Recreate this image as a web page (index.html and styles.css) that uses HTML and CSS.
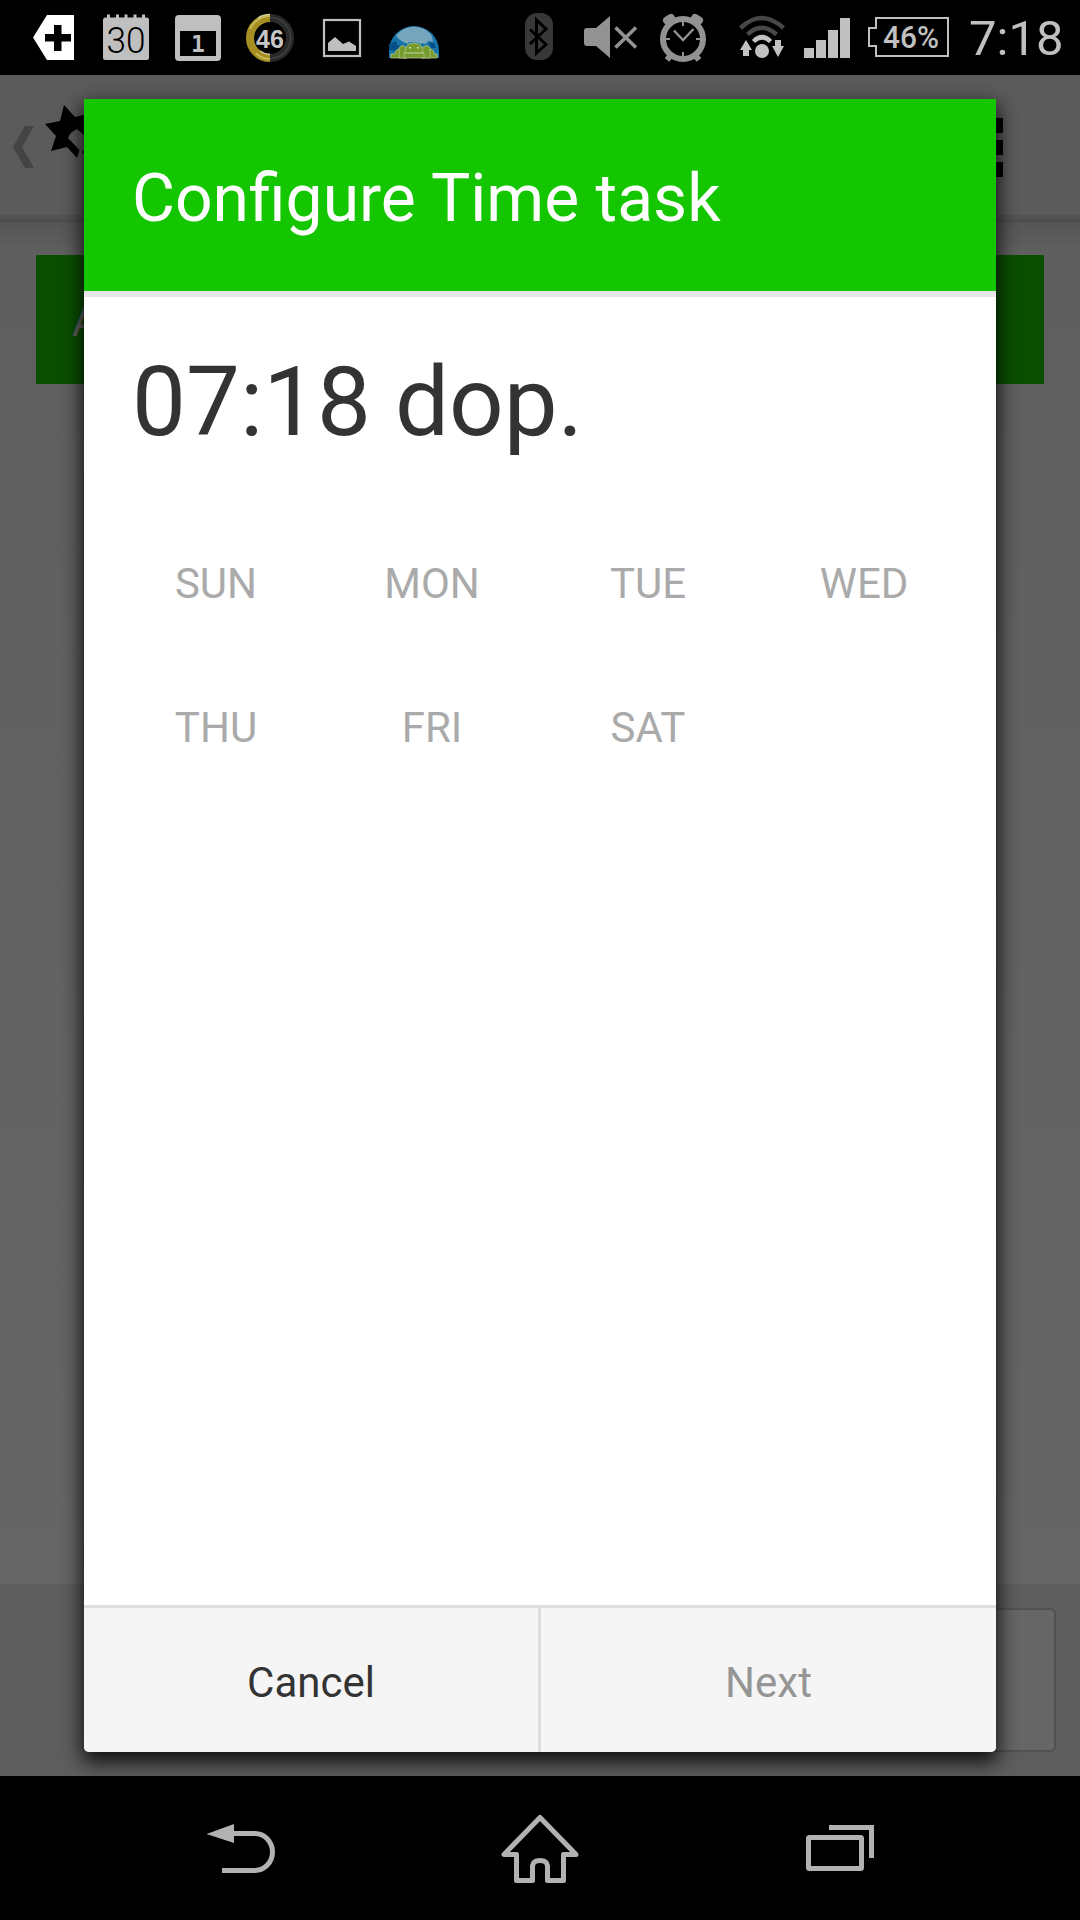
FILE: index.html
```html
<!DOCTYPE html>
<html lang="en">
<head>
<meta charset="utf-8">
<title>Configure Time task</title>
<link rel="stylesheet" href="styles.css">
</head>
<body>
<div class="screen">
  <header class="status">
    <div class="status-group notifications">
      <svg width="72" height="75" viewBox="18 0 72 75"><path fill="#fff" d="M47 15H74V60H47L33 37.500Z"/><path d="M54 25h7.500v9H71v7.500h-9.500V51H54v-9.500h-9V34h9z"/></svg>
      <svg width="72" height="75" viewBox="90 0 72 75" fill="#bfbfbf"><rect x="103" y="17.500" width="46" height="42.500" rx="2.500"/><path stroke="#bfbfbf" stroke-width="3" d="M108.500 14.500v5M117.500 14.500v5M126 14.500v5M135 14.500v5M143.500 14.500v5"/><text class="cal-thirty" x="106.500" y="52.500" textLength="39" lengthAdjust="spacingAndGlyphs">30</text></svg>
      <svg width="72" height="75" viewBox="162 0 72 75"><path fill="#bfbfbf" fill-rule="evenodd" d="M179 15H217Q221 15 221 19V57Q221 61 217 61H179Q175 61 175 57V19Q175 15 179 15ZM180 31V56H216V31Z"/><text class="cal-one" x="198" y="52">1</text></svg>
      <svg width="72" height="75" viewBox="234 0 72 75" fill="none"><circle cx="270" cy="38" r="20" stroke="#292929" stroke-width="8"/><circle cx="270" cy="38" r="20.500" stroke="#404040" stroke-width="1.500"/><path stroke="#a68e20" stroke-width="8" d="M270 18A20 20 0 0 0 270 58"/><path stroke="#c5b957" stroke-width="2" d="M270 16A22 22 0 0 0 250 29M256 53.500A21 21 0 0 0 270 59"/><path stroke="#d1cca0" stroke-width="1.500" d="M270 14.500Q263 14.500 258 18M270 54.500Q264 54 260 51"/><text class="gauge" x="270" y="48">46</text></svg>
      <svg width="72" height="75" viewBox="306 0 72 75"><rect x="324" y="20" width="36" height="36" fill="none" stroke="#bfbfbf" stroke-width="2.200"/><path fill="#bfbfbf" d="M328 51V43L335 37L343 44L349 41.500L356 46V51Z"/></svg>
      <svg width="72" height="75" viewBox="378 0 72 75"><path fill="#1874a8" d="M389 58V51A25 25 0 0 1 439 51V58Z"/><path fill="#75a6bd" d="M396 36A21 19 0 0 1 432 36L433 42L428 41L426 44L420 43L412 42L405 43L400 40Z"/><path fill="#075087" d="M389 44l7-3 2 5 3-1-3 6-9-1zM429 42l5 1 2 5h-5z"/><g fill="#759b2d" stroke="#b4c78b" stroke-width=".8"><path d="M391 58v-4h4q0-5 5-5t6 3v6zM423 58v-6q1-3 6-3t5 5h3v4z"/><path d="M399 58v-8q0-5 5-4l3 3v9zM421 58v-9q5-6 9-1v10z"/><path d="M404 58v-5h20v5zM405 53q0-10 9-10t9 10zM408 44l-2-3M420 44l2-3"/></g><path fill="#ccd8b4" d="M409 47h2v1.500h-2zM417 47h2v1.500h-2z"/></svg>
    </div>
    <div class="status-group system">
      <svg width="72" height="75" viewBox="504 0 72 75"><rect x="525" y="13" width="28" height="47" rx="12" fill="#383838"/><path fill="none" stroke="#000" stroke-width="3" d="M530 29.500L546 44.500L536.500 53V20L546 29L530 44"/></svg>
      <svg width="72" height="75" viewBox="576 0 72 75"><path fill="#929292" d="M587 28H596L610 16V58L596 46H587Q584 46 584 43V31Q584 28 587 28Z"/><path stroke="#929292" stroke-width="3.600" d="M615.500 27.500L636 47.500M636 27.500L615.500 47.500"/></svg>
      <svg width="72" height="75" viewBox="648 0 72 75" fill="none" stroke="#929292"><circle cx="683" cy="39" r="20" stroke-width="6"/><path stroke-width="8" stroke-linecap="round" d="M667 20.500L671 18M695 18L699 20.500"/><path stroke-width="6" d="M671 55L667 60M695 55L699 60"/><path stroke-width="2" d="M683 21v5M683 52v5M665 39h5M696 39h5"/><path stroke-width="2.400" d="M674 30.500L683 40L693.500 29"/></svg>
      <svg width="72" height="75" viewBox="720 0 72 75" fill="none"><path stroke="#474747" stroke-width="4.500" d="M740.500 28Q761.500 8 783.500 28M747.500 34.500Q761.500 21 776.500 34.500"/><path stroke="#c2c2c2" stroke-width="4.500" d="M753.500 41.500Q762 33 770.500 41.500"/><circle cx="762" cy="51" r="7" fill="#c2c2c2"/><path fill="#c2c2c2" d="M746 40L752 50H749V56H743V50H740ZM778 57L772 46H775V40H781V46H784Z"/></svg>
      <svg width="66" height="75" viewBox="792 0 66 75"><path fill="#c0c0c0" d="M804 48h10v10h-10zM816 40h10v18h-10zM828 30h10v28h-10zM840 18h10v40h-10z"/></svg>
      <svg width="102" height="75" viewBox="858 0 102 75"><path fill="none" stroke="#c0c0c0" stroke-width="2" d="M876 18H948V56H876V46H869V28H876Z"/><text class="battery-text" x="883" y="47.500" textLength="56" lengthAdjust="spacingAndGlyphs">46%</text></svg>
      <span class="clock">7:18</span>
    </div>
  </header>

  <main class="app">
    <div class="app-bar">
      <svg class="brand" width="110" height="142" viewBox="0 75 110 142"><path fill="#444" d="M25 126H34L22 147L34 168H25L13 147Z"/><path d="M64 105L75 117L92 113V142L84 135L77 129Q70 132 68 138L79.500 150L77 158L67 147L51 151L56 136L45 124L60 121ZM82 152L88 146V158Z"/></svg>
      <div class="overflow"><i></i><i></i><i></i></div>
    </div>
    <div class="app-body"><div class="add-button">A</div></div>
    <div class="app-footer"><div class="footer-button"></div></div>
    <section class="dialog">
      <h1 class="dialog-title">Configure Time task</h1>
      <div class="dialog-body">
        <div class="time"><span>07:18 dop.</span></div>
        <div class="days">
          <span>SUN</span><span>MON</span><span>TUE</span><span>WED</span>
          <span>THU</span><span>FRI</span><span>SAT</span>
        </div>
      </div>
      <div class="actions">
        <button class="action"><span>Cancel</span></button>
        <button class="action disabled"><span>Next</span></button>
      </div>
    </section>
  </main>

  <nav class="nav">
    <svg width="300" height="144" viewBox="90 1776 300 144"><path fill="none" stroke="#b2b2b2" stroke-width="5" d="M232 1833.500H255A17.500 18.500 0 0 1 255 1870.500H222"/><path fill="#b2b2b2" d="M206.500 1834L234 1824V1843Z"/></svg>
    <svg width="300" height="144" viewBox="390 1776 300 144"><path fill="none" stroke="#b2b2b2" stroke-width="5" stroke-linejoin="round" d="M540 1817.500L504 1854.500H516.500V1880.500H532.500V1866Q533 1860.500 540 1860.500T547.500 1866V1880.500H563.500V1854.500H576Z"/><path d="M535 1877.500H545V1884H535Z"/></svg>
    <svg width="300" height="144" viewBox="690 1776 300 144" fill="none" stroke="#b2b2b2" stroke-width="5"><rect x="808.500" y="1837.500" width="53" height="31" rx="1"/><path d="M829 1827.500H871.500V1858"/></svg>
  </nav>
</div>
</body>
</html>
```
FILE: styles.css
```css
* { box-sizing: border-box; }

body {
  margin: 0;
  background: #000;
  font-family: Roboto, "Noto Sans", sans-serif;
}

.screen {
  width: 1080px;
  height: 1920px;
  display: flex;
  flex-direction: column;
  overflow: hidden;
}

svg { display: block; flex: none; }

/* Status bar */
.status {
  height: 75px;
  flex: none;
  display: flex;
  justify-content: space-between;
  padding: 0 18px;
  background: #000;
}
.status-group { display: flex; }
.clock {
  width: 102px;
  padding: 10px 0 0 9px;
  font-size: 49px;
  line-height: 58px;
  color: #c0c0c0;
  white-space: nowrap;
}
.cal-thirty { font: 300 36px "Roboto", sans-serif; fill: #000; }
.cal-one { font: bold 23px "DejaVu Sans Mono", monospace; fill: #bfbfbf; text-anchor: middle; }
.gauge { font: bold 25px "Liberation Sans", sans-serif; fill: #c6c6c6; text-anchor: middle; }
.battery-text { font: 500 31px Roboto, sans-serif; fill: #c0c0c0; }

/* Dimmed activity behind the dialog */
.app {
  position: relative;
  flex: 1;
  display: flex;
  flex-direction: column;
  background: linear-gradient(#5e5e5e, #666);
}
.app-bar {
  height: 147px;
  flex: none;
  display: flex;
  justify-content: space-between;
  background: linear-gradient(#5b5b5b 0 140px, #535353 140px 144px, #4e4e4e 144px);
}
.overflow {
  width: 97px;
  padding-top: 43px;
  display: flex;
  flex-direction: column;
  gap: 7px;
}
.overflow i { width: 20px; height: 15px; background: #000; }
.app-body {
  flex: 1;
  padding: 33px 36px;
  background: linear-gradient(rgba(0, 0, 0, .1), transparent 30px);
}
.add-button {
  height: 129px;
  padding-left: 36px;
  background: #0a4f00;
  color: #616161;
  font-size: 42px;
  line-height: 134px;
}
.app-footer {
  height: 192px;
  flex: none;
  display: flex;
  justify-content: flex-end;
  padding: 24px;
  background: #5e5e5e;
}
.footer-button {
  width: 504px;
  height: 144px;
  border: 2px solid #515151;
  border-radius: 6px;
  background: #666;
}

/* Dialog */
.dialog {
  position: absolute;
  top: 24px;
  left: 84px;
  width: 912px;
  height: 1653px;
  display: flex;
  flex-direction: column;
  background: #fff;
  border-radius: 0 0 5px 5px;
  box-shadow: 0 8px 20px 2px rgba(0, 0, 0, .85);
}
.dialog-title {
  height: 198px;
  flex: none;
  margin: 0;
  padding-left: 48px;
  border-bottom: 6px solid #e6e6e6;
  background: #14c600;
  color: #fff;
  font-size: 66px;
  font-weight: 400;
  line-height: 199px;
}
.dialog-body { flex: 1; }
.time {
  height: 215px;
  padding-left: 48px;
  color: #333;
  font-size: 96px;
  line-height: 210px;
}
.days {
  display: grid;
  grid-template-columns: repeat(4, 216px);
  grid-auto-rows: 144px;
  padding-left: 24px;
  color: #aaa;
  font-size: 42px;
  line-height: 144px;
  text-align: center;
}
.actions {
  height: 147px;
  flex: none;
  display: grid;
  grid-template-columns: 454px 458px;
  border-top: 3px solid #ddd;
  border-radius: 0 0 5px 5px;
  overflow: hidden;
}
.action {
  padding: 5px 0 0;
  border: 0;
  border-bottom: 2px solid #d8d8d8;
  background: #f5f5f5;
  color: #333;
  font: 42px/139px Roboto, sans-serif;
}
.action + .action { border-left: 3px solid #ddd; }
.action.disabled { color: #959595; }

/* Navigation bar */
.nav {
  height: 144px;
  flex: none;
  display: flex;
  justify-content: center;
  background: #000;
}
```
